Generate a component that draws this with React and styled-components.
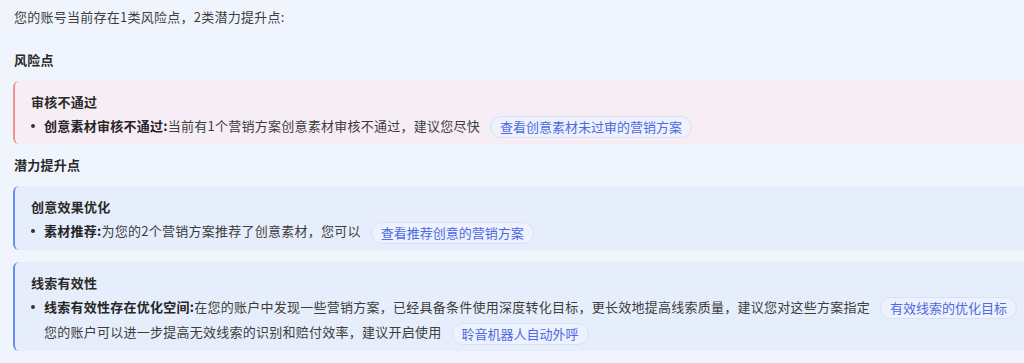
import React from "react";
import styled, { createGlobalStyle } from "styled-components";

const Global = createGlobalStyle`
  html, body { margin: 0; padding: 0; background: #f0f5fd; overflow: hidden; }
  body { font-family: "Noto Sans CJK SC", "Noto Sans", sans-serif; font-size: 13px; color: #3a3a3a; letter-spacing: 0.25px; }
  * { box-sizing: border-box; }
`;

const Page = styled.div`
  width: 100%;
  padding: 6px 0 0 13px;
  display: flex;
  flex-direction: column;
`;

const Intro = styled.div`
  line-height: 22px;
  padding-left: 1px;
  color: #3d3d3d;
  margin-bottom: 21px;
`;

const Heading = styled.div`
  line-height: 22px;
  font-weight: 700;
  color: #2a2a2a;
  padding-left: 1px;
  margin-bottom: 10px;
`;

const Card = styled.div`
  border-left: 2px solid ${(p) => (p.$tone === "risk" ? "#f29292" : "#6b8ee8")};
  background: ${(p) => (p.$tone === "risk" ? "#f6eef4" : "#e7eefb")};
  border-radius: 6px 0 0 6px;
  padding: 10px 0 6px 16px;
  margin-bottom: ${(p) => p.$mb || 0}px;
`;

const CardTitle = styled.div`
  font-weight: 700;
  line-height: 22px;
  color: #2a2a2a;
`;

const Item = styled.div`
  position: relative;
  padding-left: 13px;
  line-height: 25px;
  color: #3d3d3d;
  &::before {
    content: "";
    position: absolute;
    left: 0;
    top: 11px;
    width: 4px;
    height: 4px;
    border-radius: 50%;
    background: #333;
  }
`;

const Label = styled.span`
  font-weight: 700;
  color: #262626;
`;

const Line = styled.div`
  line-height: 25px;
  white-space: nowrap;
`;

const Tag = styled.span`
  display: inline-block;
  margin-left: 10px;
  padding: 0 9px;
  height: 22px;
  line-height: 20px;
  letter-spacing: 0;
  border: 1px solid #d8e1f8;
  border-radius: 11px;
  background: #edf2fe;
  color: #4d6ae0;
  vertical-align: middle;
`;

export default function App() {
  return (
    <>
      <Global />
      <Page>
        <Intro>您的账号当前存在1类风险点，2类潜力提升点:</Intro>
        <Heading>风险点</Heading>
        <Card $tone="risk" $mb={10}>
          <CardTitle>审核不通过</CardTitle>
          <Item>
            <Line>
              <Label>创意素材审核不通过:</Label>当前有1个营销方案创意素材审核不通过，建议您尽快
              <Tag>查看创意素材未过审的营销方案</Tag>
            </Line>
          </Item>
        </Card>
        <Heading>潜力提升点</Heading>
        <Card $mb={12}>
          <CardTitle>创意效果优化</CardTitle>
          <Item>
            <Line>
              <Label>素材推荐:</Label>为您的2个营销方案推荐了创意素材，您可以
              <Tag>查看推荐创意的营销方案</Tag>
            </Line>
          </Item>
        </Card>
        <Card>
          <CardTitle>线索有效性</CardTitle>
          <Item>
            <Line>
              <Label>线索有效性存在优化空间:</Label>在您的账户中发现一些营销方案，已经具备条件使用深度转化目标，更长效地提高线索质量，建议您对这些方案指定
              <Tag>有效线索的优化目标</Tag>
            </Line>
            <Line>
              您的账户可以进一步提高无效线索的识别和赔付效率，建议开启使用
              <Tag>聆音机器人自动外呼</Tag>
            </Line>
          </Item>
        </Card>
      </Page>
    </>
  );
}
